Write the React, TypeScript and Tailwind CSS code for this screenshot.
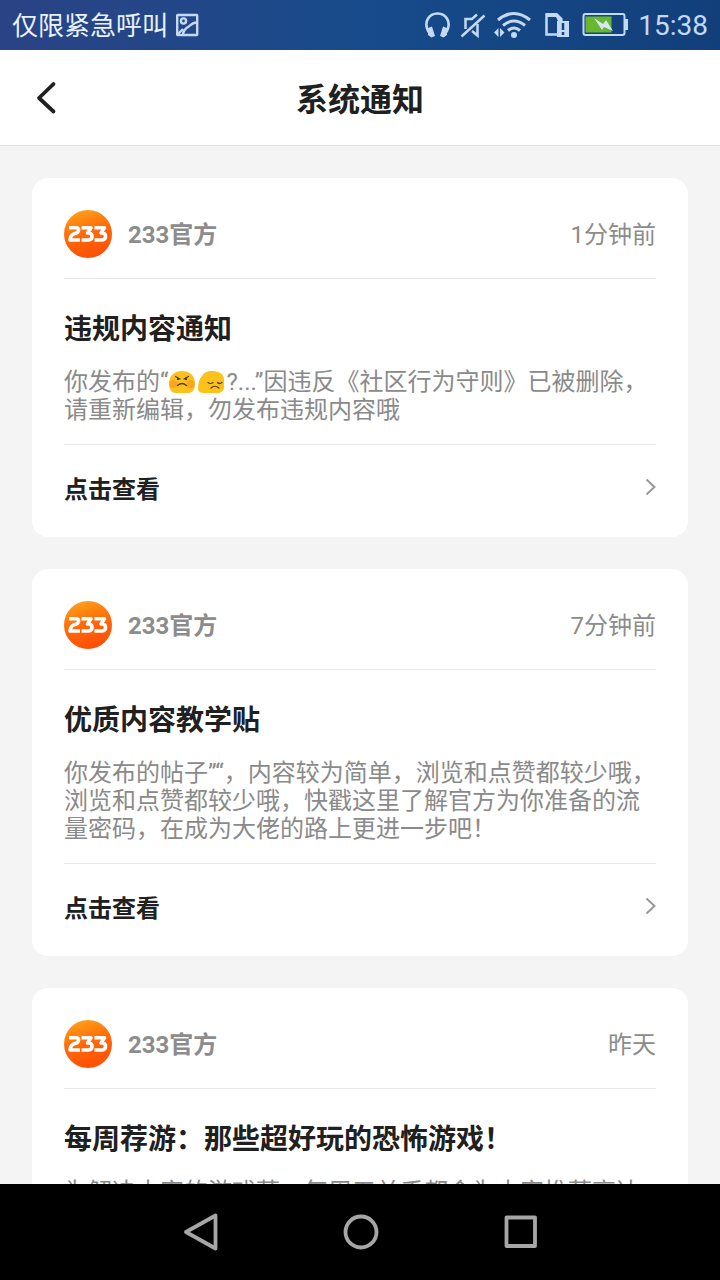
import React from 'react';

type Notice = {
  id: number;
  time: string;
  title: string;
  body: React.ReactNode;
};

const AngryFace = () => (
  <svg viewBox="0 0 28 24" className="inline-block w-7 h-6 mr-px align-[-4px]" role="img" aria-label="angry">
    <path d="M14 1C21 1 27 5 27 13.500C27 20 24 23 20 23H8C4 23 1 20 1 13.500C1 5 7 1 14 1Z" fill="#fcc21b" />
    <circle cx="5.500" cy="14" r="4" fill="#f79329" opacity=".65" />
    <circle cx="22.500" cy="14" r="4" fill="#f79329" opacity=".65" />
    <g fill="none" stroke="#4a3a1c" strokeLinecap="round" strokeWidth="1.200">
      <path d="M7.500 6.500L12 9M20.500 6.500L16 9" />
      <path d="M9.500 15.500Q14 11.500 18.500 15.500" />
    </g>
    <circle cx="10" cy="9" r="1.200" fill="#4a3a1c" />
    <circle cx="18" cy="9" r="1.200" fill="#4a3a1c" />
  </svg>
);

const SadFace = () => (
  <svg viewBox="0 0 28 24" className="inline-block w-7 h-6 mr-px align-[-4px]" role="img" aria-label="pensive">
    <path d="M14 1C21 1 27 3 27 10V17C27 21 24 23 20 23H8C4 23 1 22 1 19C1 8 7 1 14 1Z" fill="#fcc21b" />
    <g fill="none" stroke="#4a3a1c" strokeLinecap="round" strokeWidth="1.200">
      <path d="M11 12.500Q13.500 14.500 16 12.500M20.500 12.500Q22.500 14.500 25 12.500" />
      <path d="M14 18Q18 14.500 22 18" />
    </g>
  </svg>
);

const notices: Notice[] = [
  {
    id: 1,
    time: '1分钟前',
    title: '违规内容通知',
    body: (
      <>
        你发布的“
        <AngryFace />
        <SadFace />
        ?...”因违反《社区行为守则》已被删除，
        <br />
        请重新编辑，勿发布违规内容哦
      </>
    ),
  },
  {
    id: 2,
    time: '7分钟前',
    title: '优质内容教学贴',
    body: (
      <>
        你发布的帖子”“，内容较为简单，浏览和点赞都较少哦，
        <br />
        浏览和点赞都较少哦，快戳这里了解官方为你准备的流
        <br />
        量密码，在成为大佬的路上更进一步吧！
      </>
    ),
  },
  {
    id: 3,
    time: '昨天',
    title: '每周荐游：那些超好玩的恐怖游戏！',
    body: <>为解决大家的游戏荒，每周五关乎都会为大家推荐高达</>,
  },
];

const StatusBar = () => (
  <div className="flex h-[50px] shrink-0 items-center justify-between bg-linear-to-r from-[#2a4385] via-[#174b8b] to-[#123f7a] px-3 text-[#c3d9f5]">
    <div className="flex items-center gap-2">
      <span className="pt-0.5 text-[26px] leading-8 text-[#e8f2ff]">仅限紧急呼叫</span>
      <svg viewBox="0 0 24 24" className="size-6" fill="none" stroke="currentColor" strokeWidth="2.400">
        <rect x="1.200" y="2" width="20" height="20" rx="0.500" />
        <circle cx="7.500" cy="8" r="2.600" />
        <path d="M7 21C8 15 12 14.500 14 12.500S17 9.500 21 9.500M2 21L7 16" />
      </svg>
    </div>
    <div className="flex items-center">
      <svg viewBox="0 0 28 28" className="mr-2 size-7" fill="none" stroke="currentColor">
        <path d="M4.500 21C-1 11 5 2.500 13.500 2.500S28 11 22.500 21" strokeWidth="2.600" />
        <path d="M4 17L8 15.500L11 25L7.500 26.500L4 24ZM23 17L19 15.500L16 25L19.500 26.500L23 24Z" fill="currentColor" stroke="none" />
      </svg>
      <svg viewBox="0 0 26 28" className="mr-2 h-7 w-[26px]" fill="none" stroke="currentColor" strokeWidth="2.500">
        <path d="M17 3.500L12 8H5.500V18M12 20L17.500 24.500V13" />
        <path d="M1.500 25.500L24.500 4.500" />
      </svg>
      <svg viewBox="0 0 38 28" className="mr-3 h-7 w-[38px]" fill="none" stroke="currentColor" strokeWidth="3">
        <path d="M4 9Q20 -4 36 9M9 14.500Q20 5.500 31 14.500M14 19.500Q20 14.500 26 19.500" />
        <circle cx="20" cy="24" r="3" fill="currentColor" stroke="none" />
        <path d="M4.500 17V26L0 21.500ZM6 17V26L10.500 21.500Z" fill="currentColor" stroke="none" />
      </svg>
      <svg viewBox="0 0 26 28" className="mr-3 h-7 w-[26px]" fill="none" stroke="currentColor" strokeWidth="2.500">
        <path d="M13 23.500H2.500V3.500H12.500L17 8V10" />
        <path d="M2 2H13L18.500 7.500V10H14L12 6H2Z" fill="currentColor" stroke="none" />
        <rect x="13" y="10" width="12" height="16" fill="currentColor" stroke="none" />
        <path d="M19 12V19M19 21V24" stroke="#12437f" />
      </svg>
      <svg viewBox="0 0 46 24" className="mr-2.5 h-6 w-[46px]">
        <rect x="1.500" y="1" width="41" height="21" rx="2" fill="none" stroke="currentColor" strokeWidth="2" />
        <rect x="43" y="6" width="3" height="11" fill="currentColor" />
        <rect x="3.500" y="3.500" width="26" height="16" fill="#67b82e" />
        <path d="M12 5L21 11L24 7L31 18L22 14L20 17Z" fill="#d5e8f0" />
      </svg>
      <span className="pt-0.5 text-[28px] leading-8">15:38</span>
    </div>
  </div>
);

const Logo = () => (
  <svg viewBox="0 0 48 48" className="size-12" role="img" aria-label="233">
    <defs>
      <linearGradient id="logo" x1="0.200" y1="0" x2="0.500" y2="1">
        <stop offset="0" stopColor="#ffa31a" />
        <stop offset="0.500" stopColor="#ff6a0a" />
        <stop offset="1" stopColor="#ff4f05" />
      </linearGradient>
    </defs>
    <circle cx="24" cy="24" r="24" fill="url(#logo)" />
    <g fill="none" stroke="#fff" strokeWidth="3.600" strokeLinejoin="round">
      <path d="M5 17.800H12Q15 17.800 14.500 20.500Q14 23 11 23.500Q6.500 24.500 6 30H16" />
      <path d="M17.500 17.800H27L23.500 23H25.500Q28 23.500 28 26.500T24.500 30H17.500" />
      <path d="M30.500 17.800H40.500L37 23H39Q41.500 23.500 41.500 26.500T38 30H30.500" />
    </g>
  </svg>
);

const NoticeCard = ({ time, title, body }: Notice) => (
  <article className="shrink-0 rounded-2xl bg-white px-8 pt-8">
    <header className="flex items-center border-b border-[#e8e8e8] pb-5">
      <Logo />
      <span className="ml-4 flex-1 pt-0.5 text-2xl font-bold text-[#8c8c8c]">233官方</span>
      <time className="pt-0.5 text-2xl text-[#8c8c8c]">{time}</time>
    </header>
    <h2 className="mt-[33px] text-[28px] leading-9 font-bold text-[#202020]">{title}</h2>
    <p className="mt-5 text-2xl leading-7 whitespace-nowrap text-[#8a8a8a]">{body}</p>
    <a href="#" className="mt-5 flex h-[93px] items-center justify-between border-t border-[#e8e8e8] pb-1">
      <span className="pt-0.5 text-2xl font-bold text-[#202020]">点击查看</span>
      <svg viewBox="0 0 12 18" className="mb-1 h-[18px] w-3" fill="none" stroke="#999" strokeWidth="2">
        <path d="M2.500 1.500L10.500 9L2.500 16.500" />
      </svg>
    </a>
  </article>
);

export default function App() {
  return (
    <div className="flex h-screen flex-col overflow-hidden bg-[#f4f4f4] font-[Roboto,'Noto_Sans_CJK_SC',sans-serif]">
      <StatusBar />
      <header className="grid h-24 shrink-0 grid-cols-[1fr_auto_1fr] items-center border-b border-[#e2e2e2] bg-white px-8">
        <button type="button" aria-label="返回" className="justify-self-start">
          <svg viewBox="0 0 28 36" className="h-9 w-7" fill="none" stroke="#202020" strokeWidth="3.800" strokeLinecap="round" strokeLinejoin="round">
            <path d="M21.500 4L7 18L21.500 31.500" />
          </svg>
        </button>
        <h1 className="pt-1 text-[32px] leading-10 font-bold text-[#202020]">系统通知</h1>
      </header>
      <main className="flex min-h-0 flex-1 flex-col gap-8 overflow-y-auto p-8 [scrollbar-width:none]">
        {notices.map((notice) => (
          <NoticeCard key={notice.id} {...notice} />
        ))}
      </main>
      <nav className="flex h-24 shrink-0 items-center justify-center gap-[120px] bg-black">
        <button type="button" aria-label="后退">
          <svg viewBox="0 0 40 40" className="size-10" fill="none" stroke="#a6a6a6" strokeWidth="3.800" strokeLinejoin="round">
            <path d="M35.500 3.500V36.500L6 20Z" />
          </svg>
        </button>
        <button type="button" aria-label="主页">
          <svg viewBox="0 0 40 40" className="size-10" fill="none" stroke="#a6a6a6" strokeWidth="3.800">
            <circle cx="21" cy="20" r="15.500" />
          </svg>
        </button>
        <button type="button" aria-label="最近任务">
          <svg viewBox="0 0 40 40" className="size-10" fill="none" stroke="#a6a6a6" strokeWidth="3.800" strokeLinejoin="round">
            <rect x="6.500" y="5.500" width="28.500" height="28.500" />
          </svg>
        </button>
      </nav>
    </div>
  );
}
